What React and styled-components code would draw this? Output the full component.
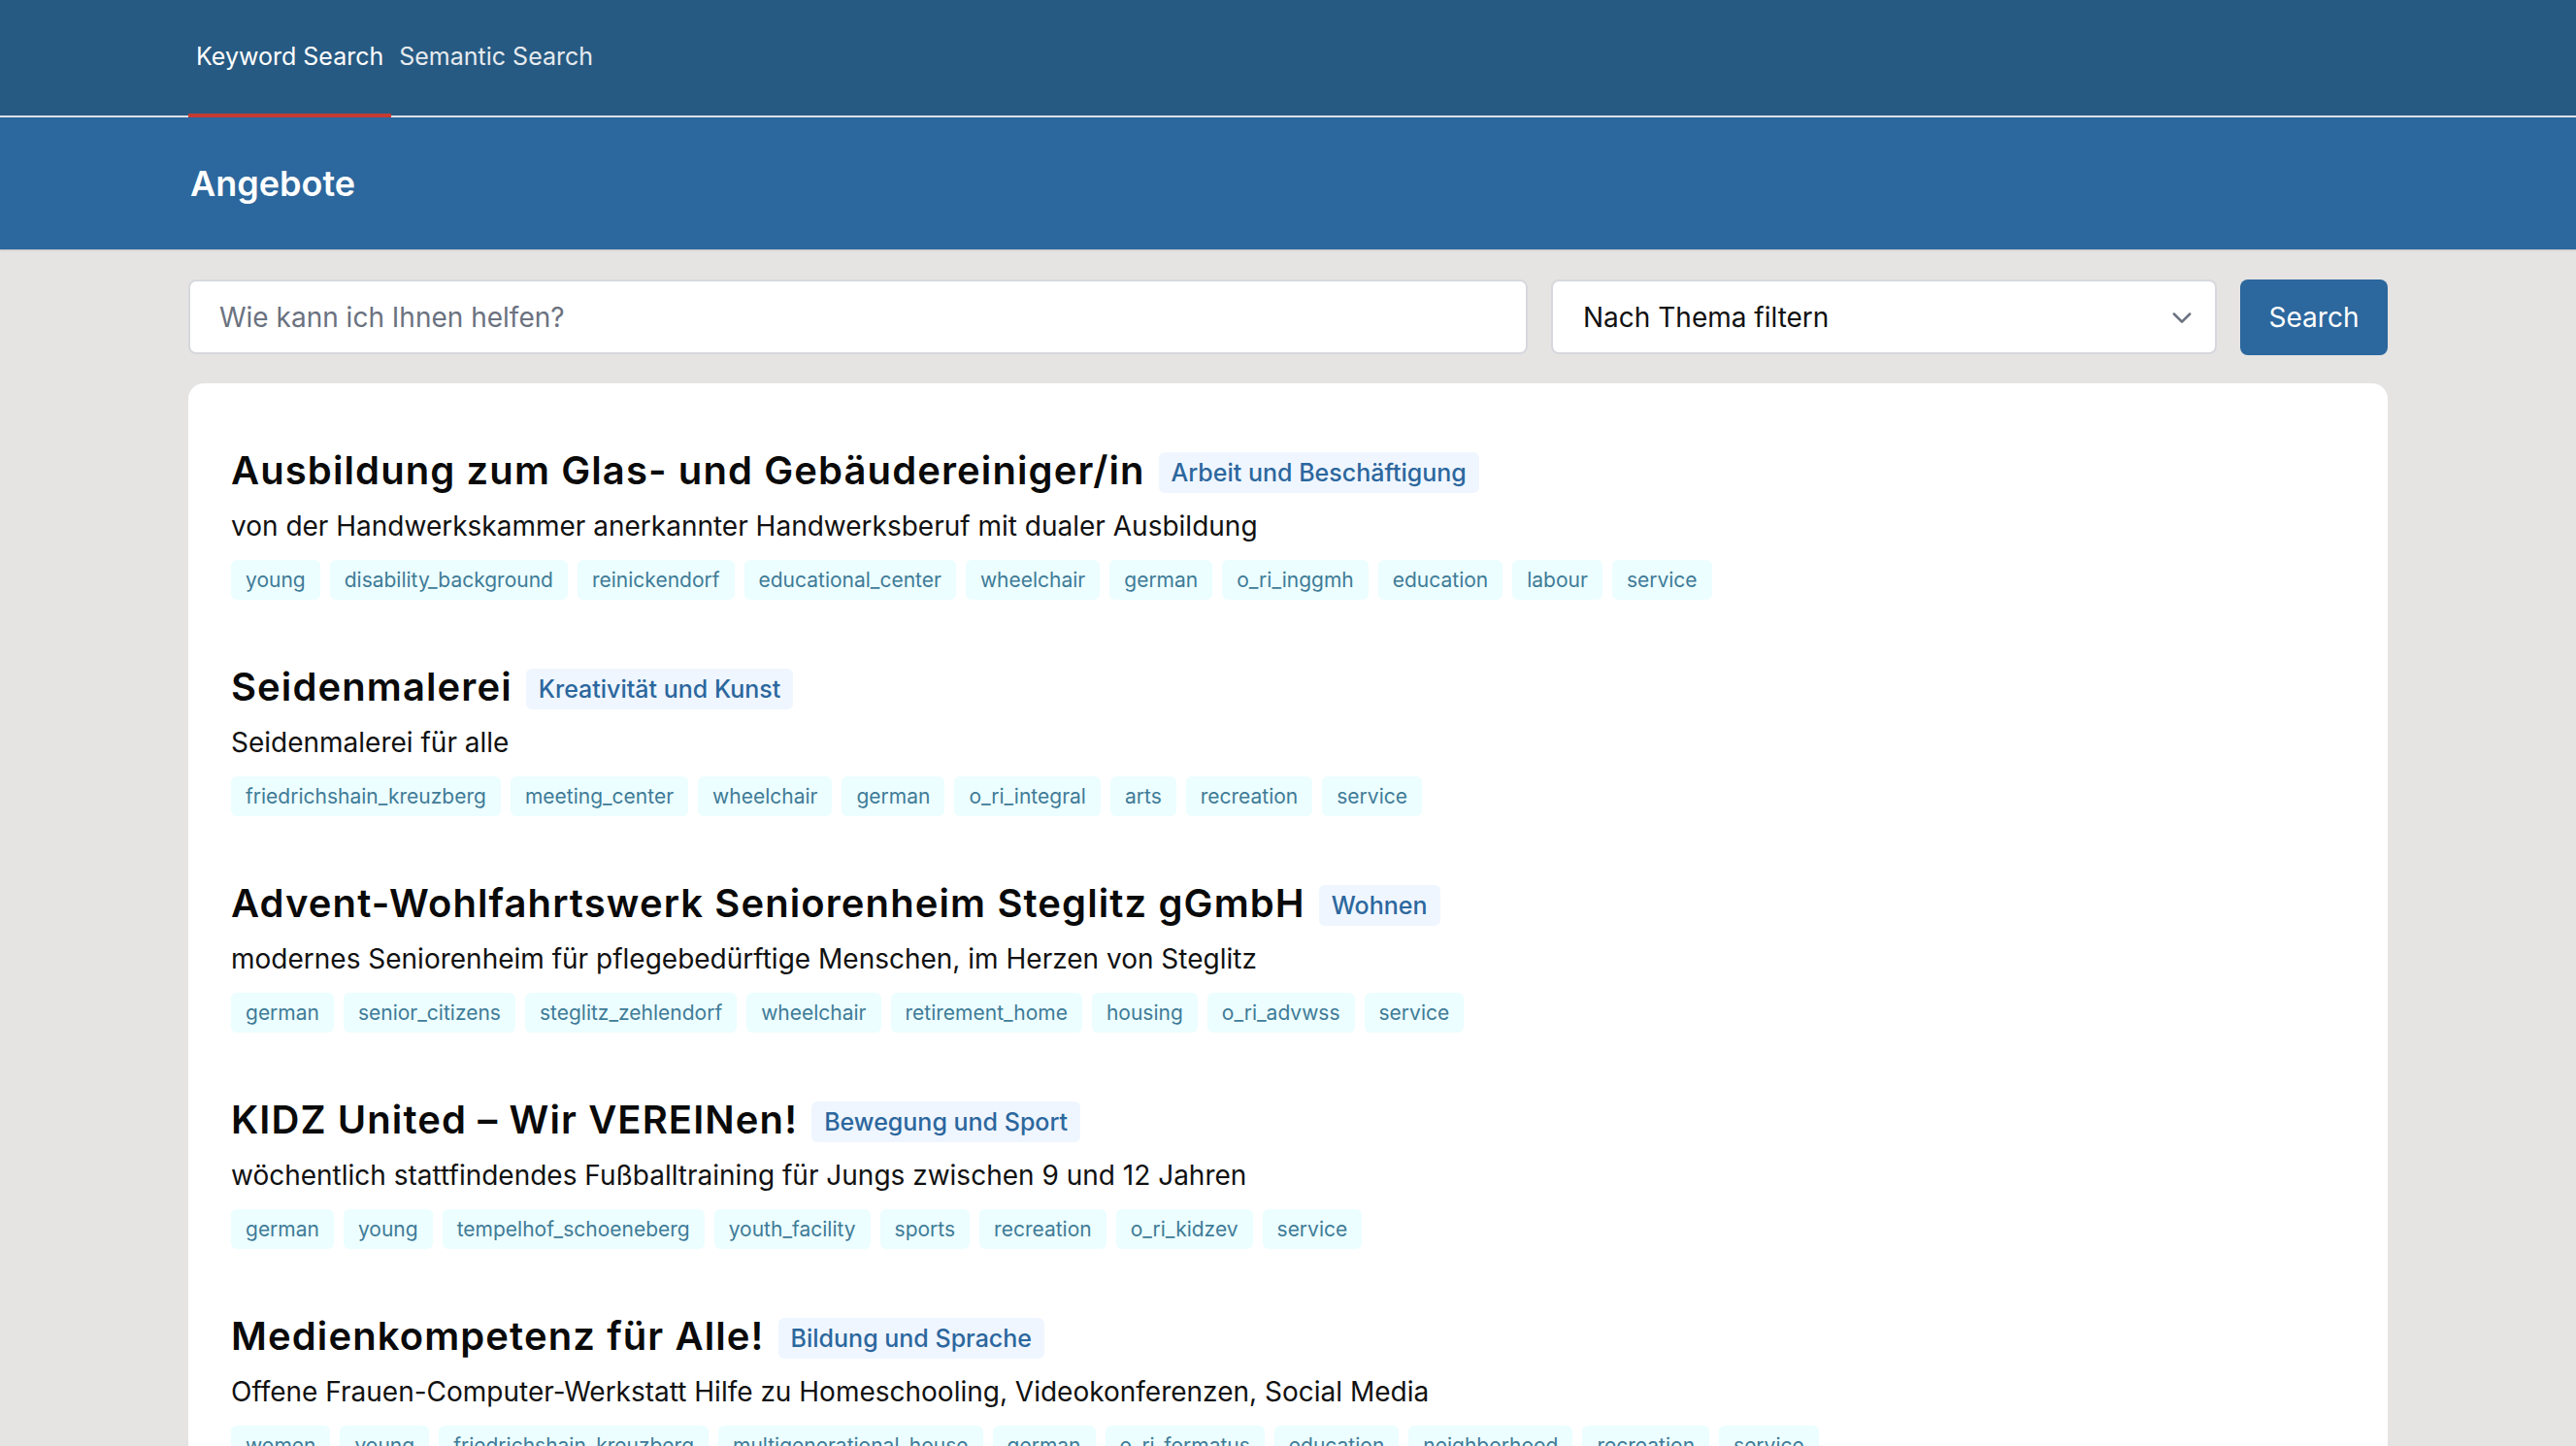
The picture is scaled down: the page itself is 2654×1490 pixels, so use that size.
import styled, { createGlobalStyle } from "styled-components";

const GlobalStyle = createGlobalStyle`
  body {
    margin: 0;
    background: #e5e4e3;
    font-family: Inter, "Noto Sans", sans-serif;
    color: #111111;
  }
  * { box-sizing: border-box; }
`;

const offers = [
  {
    title: "Ausbildung zum Glas- und Gebäudereiniger/in",
    category: "Arbeit und Beschäftigung",
    text: "von der Handwerkskammer anerkannter Handwerksberuf mit dualer Ausbildung",
    tags: ["young", "disability_background", "reinickendorf", "educational_center", "wheelchair", "german", "o_ri_inggmh", "education", "labour", "service"],
  },
  {
    title: "Seidenmalerei",
    category: "Kreativität und Kunst",
    text: "Seidenmalerei für alle",
    tags: ["friedrichshain_kreuzberg", "meeting_center", "wheelchair", "german", "o_ri_integral", "arts", "recreation", "service"],
  },
  {
    title: "Advent-Wohlfahrtswerk Seniorenheim Steglitz gGmbH",
    category: "Wohnen",
    text: "modernes Seniorenheim für pflegebedürftige Menschen, im Herzen von Steglitz",
    tags: ["german", "senior_citizens", "steglitz_zehlendorf", "wheelchair", "retirement_home", "housing", "o_ri_advwss", "service"],
  },
  {
    title: "KIDZ United – Wir VEREINen!",
    category: "Bewegung und Sport",
    text: "wöchentlich stattfindendes Fußballtraining für Jungs zwischen 9 und 12 Jahren",
    tags: ["german", "young", "tempelhof_schoeneberg", "youth_facility", "sports", "recreation", "o_ri_kidzev", "service"],
  },
  {
    title: "Medienkompetenz für Alle!",
    category: "Bildung und Sprache",
    text: "Offene Frauen-Computer-Werkstatt Hilfe zu Homeschooling, Videokonferenzen, Social Media",
    tags: ["women", "young", "friedrichshain_kreuzberg", "multigenerational_house", "german", "o_ri_formatus", "education", "neighborhood", "recreation", "service"],
  },
];

export default function App() {
  return (
    <>
      <GlobalStyle />
      <TopNav>
        <Container>
          <Tabs>
            <Tab $active>Keyword Search</Tab>
            <Tab>Semantic Search</Tab>
          </Tabs>
        </Container>
      </TopNav>
      <Header>
        <Container>
          <PageTitle>Angebote</PageTitle>
        </Container>
      </Header>
      <Container>
        <SearchRow>
          <SearchInput placeholder="Wie kann ich Ihnen helfen?" />
          <Select>
            <span>Nach Thema filtern</span>
            <svg width="28" height="28" viewBox="0 0 24 24" fill="none" stroke="#6b7280" strokeWidth="2.2" strokeLinecap="round" strokeLinejoin="round">
              <path d="M5 9l7 7 7-7" />
            </svg>
          </Select>
          <SearchButton>Search</SearchButton>
        </SearchRow>
        <Card>
          {offers.map((o) => (
            <Item key={o.title}>
              <TitleRow>
                <ItemTitle>{o.title}</ItemTitle>
                <Category>{o.category}</Category>
              </TitleRow>
              <Description>{o.text}</Description>
              <TagList>
                {o.tags.map((t) => (
                  <Tag key={t}>{t}</Tag>
                ))}
              </TagList>
            </Item>
          ))}
        </Card>
      </Container>
    </>
  );
}

const Container = styled.div`
  width: 2266px;
  margin: 0 auto;
`;

const TopNav = styled.nav`
  background: #275a82;
  height: 121px;
  border-bottom: 2px solid #dde2e8;
`;

const Tabs = styled.div`
  display: flex;
  height: 119px;
`;

const Tab = styled.a`
  display: flex;
  align-items: center;
  padding: 0 8px 2px;
  font-size: 25px;
  color: ${(p) => (p.$active ? "#ffffff" : "#e6eaef")};
  font-weight: 400;
  border-bottom: 4px solid ${(p) => (p.$active ? "#c53b33" : "transparent")};
  margin-bottom: -2px;
  cursor: pointer;
`;

const Header = styled.header`
  background: #2c679d;
  height: 136px;
  display: flex;
  align-items: center;
  box-shadow: 0 1px 2px rgba(0, 0, 0, 0.15);
`;

const PageTitle = styled.h1`
  margin: 0 0 0 2px;
  font-size: 36px;
  font-weight: 600;
  color: #ffffff;
`;

const SearchRow = styled.div`
  display: flex;
  gap: 24px;
  margin-top: 31px;
  height: 77px;
`;

const SearchInput = styled.input`
  flex: 0 0 1380px;
  height: 77px;
  border: 2px solid #d6d8dd;
  border-radius: 8px;
  background: #fff;
  padding: 0 30px;
  font-family: inherit;
  font-size: 28px;
  outline: none;
  &::placeholder {
    color: #6b7280;
  }
`;

const Select = styled.div`
  flex: 0 0 686px;
  display: flex;
  align-items: center;
  justify-content: space-between;
  height: 77px;
  border: 2px solid #d6d8dd;
  border-radius: 8px;
  background: #fff;
  padding: 0 20px 0 31px;
  font-size: 28px;
  color: #111;
`;

const SearchButton = styled.button`
  flex: 1;
  height: 78px;
  border: none;
  border-radius: 8px;
  background: #2c679d;
  color: #fff;
  font-family: inherit;
  font-size: 28px;
  cursor: pointer;
`;

const Card = styled.section`
  margin-top: 30px;
  background: #fff;
  border-radius: 16px;
  padding: 0 44px 40px;
`;

const Item = styled.article`
  padding-top: 65px;
`;

const TitleRow = styled.div`
  display: flex;
  align-items: center;
  gap: 14px;
  height: 48px;
`;

const ItemTitle = styled.h2`
  margin: 0;
  font-size: 40px;
  font-weight: 600;
  letter-spacing: 1.1px;
  color: #0a0a0a;
`;

const Category = styled.span`
  display: inline-flex;
  align-items: center;
  height: 42px;
  margin-top: 6px;
  padding: 0 13px;
  border-radius: 6px;
  background: #eff6ff;
  color: #2c679d;
  font-size: 25px;
  font-weight: 500;
`;

const Description = styled.p`
  margin: 14px 0 0;
  line-height: 40px;
  font-size: 28px;
  color: #111;
`;

const TagList = styled.div`
  display: flex;
  flex-wrap: wrap;
  gap: 10px;
  margin-top: 15px;
`;

const Tag = styled.span`
  display: inline-flex;
  align-items: center;
  height: 41px;
  padding: 0 15px;
  border-radius: 6px;
  background: #ecfeff;
  color: #3f7b97;
  font-size: 21px;
`;
